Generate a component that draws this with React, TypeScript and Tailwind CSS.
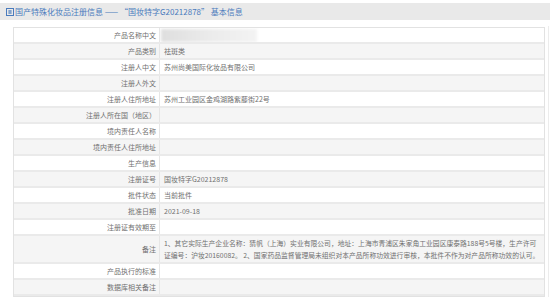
const rows: { label: string; value?: string; tall?: boolean; blur?: boolean }[] = [
  { label: '产品名称中文', blur: true },
  { label: '产品类别', value: '祛斑类' },
  { label: '注册人中文', value: '苏州尚美国际化妆品有限公司' },
  { label: '注册人外文' },
  { label: '注册人住所地址', value: '苏州工业园区金鸡湖路紫藤街22号' },
  { label: '注册人所在国（地区）' },
  { label: '境内责任人名称' },
  { label: '境内责任人住所地址' },
  { label: '生产信息' },
  { label: '注册证号', value: '国妆特字G20212878' },
  { label: '批件状态', value: '当前批件' },
  { label: '批准日期', value: '2021-09-18' },
  { label: '注册证有效期至' },
  { label: '备注', tall: true },
  { label: '产品执行的标准' },
  { label: '数据库相关备注' },
];

function TitleIcon() {
  return (
    <svg width="8" height="8" viewBox="0 0 8 8" className="shrink-0">
      <rect x="0.5" y="0.5" width="7" height="7" fill="none" stroke="#4a7bbd" strokeWidth="1" />
      <path d="M2 3h4M2 5h4M4 2v4" stroke="#4a7bbd" strokeWidth="0.8" />
    </svg>
  );
}

export default function App() {
  return (
    <div className="w-[550px] h-[297px] bg-white overflow-hidden font-['Noto_Sans_CJK_SC',sans-serif] relative">
      <div className="mt-[3px] h-[17px] bg-[#e9e9e9] flex items-center pl-[6px] gap-[1px] text-[8px] text-[#4a7bbd] whitespace-nowrap">
        <TitleIcon />
        <span>国产特殊化妆品注册信息 —— “国妆特字G20212878” 基本信息</span>
      </div>

      <div className="ml-[13px] mt-[7px] w-[532px] border border-[#e2e2e2]">
        {rows.map((r, i) => (
          <div
            key={r.label}
            className={`grid grid-cols-[146px_1fr] border-b-2 border-[#eaeaea] text-[7px] text-[#707070] ${
              i % 2 === 0 ? 'bg-white' : 'bg-[#f5f5f5]'
            } ${r.tall ? 'h-[28px]' : 'h-[16px]'}`}
          >
            <div className="flex items-center justify-end pr-[3px] border-r border-[#e6e6e6] whitespace-nowrap">
              {r.label}
            </div>
            <div className="flex items-center pl-[4px] whitespace-nowrap overflow-hidden">
              {r.blur && (
                <div className="h-[13px] w-[96px] -ml-[3px] bg-gradient-to-r from-[#dedede] via-[#ebebeb] to-[#f3f3f3] blur-[1.5px]" />
              )}
              {r.value}
              {r.tall && (
                <div className="leading-[12px] text-[6.8px]">
                  1、其它实际生产企业名称：猜帆（上海）实业有限公司，地址：上海市青浦区朱家角工业园区康泰路188号5号楼，生产许可
                  <br />
                  证编号：沪妆20160082。 2、国家药品监督管理局未组织对本产品所称功效进行审核，本批件不作为对产品所称功效的认可。
                </div>
              )}
            </div>
          </div>
        ))}
      </div>

      <div className="absolute left-[548px] top-[26px] bottom-0 w-px bg-[#ececec]" />
    </div>
  );
}
